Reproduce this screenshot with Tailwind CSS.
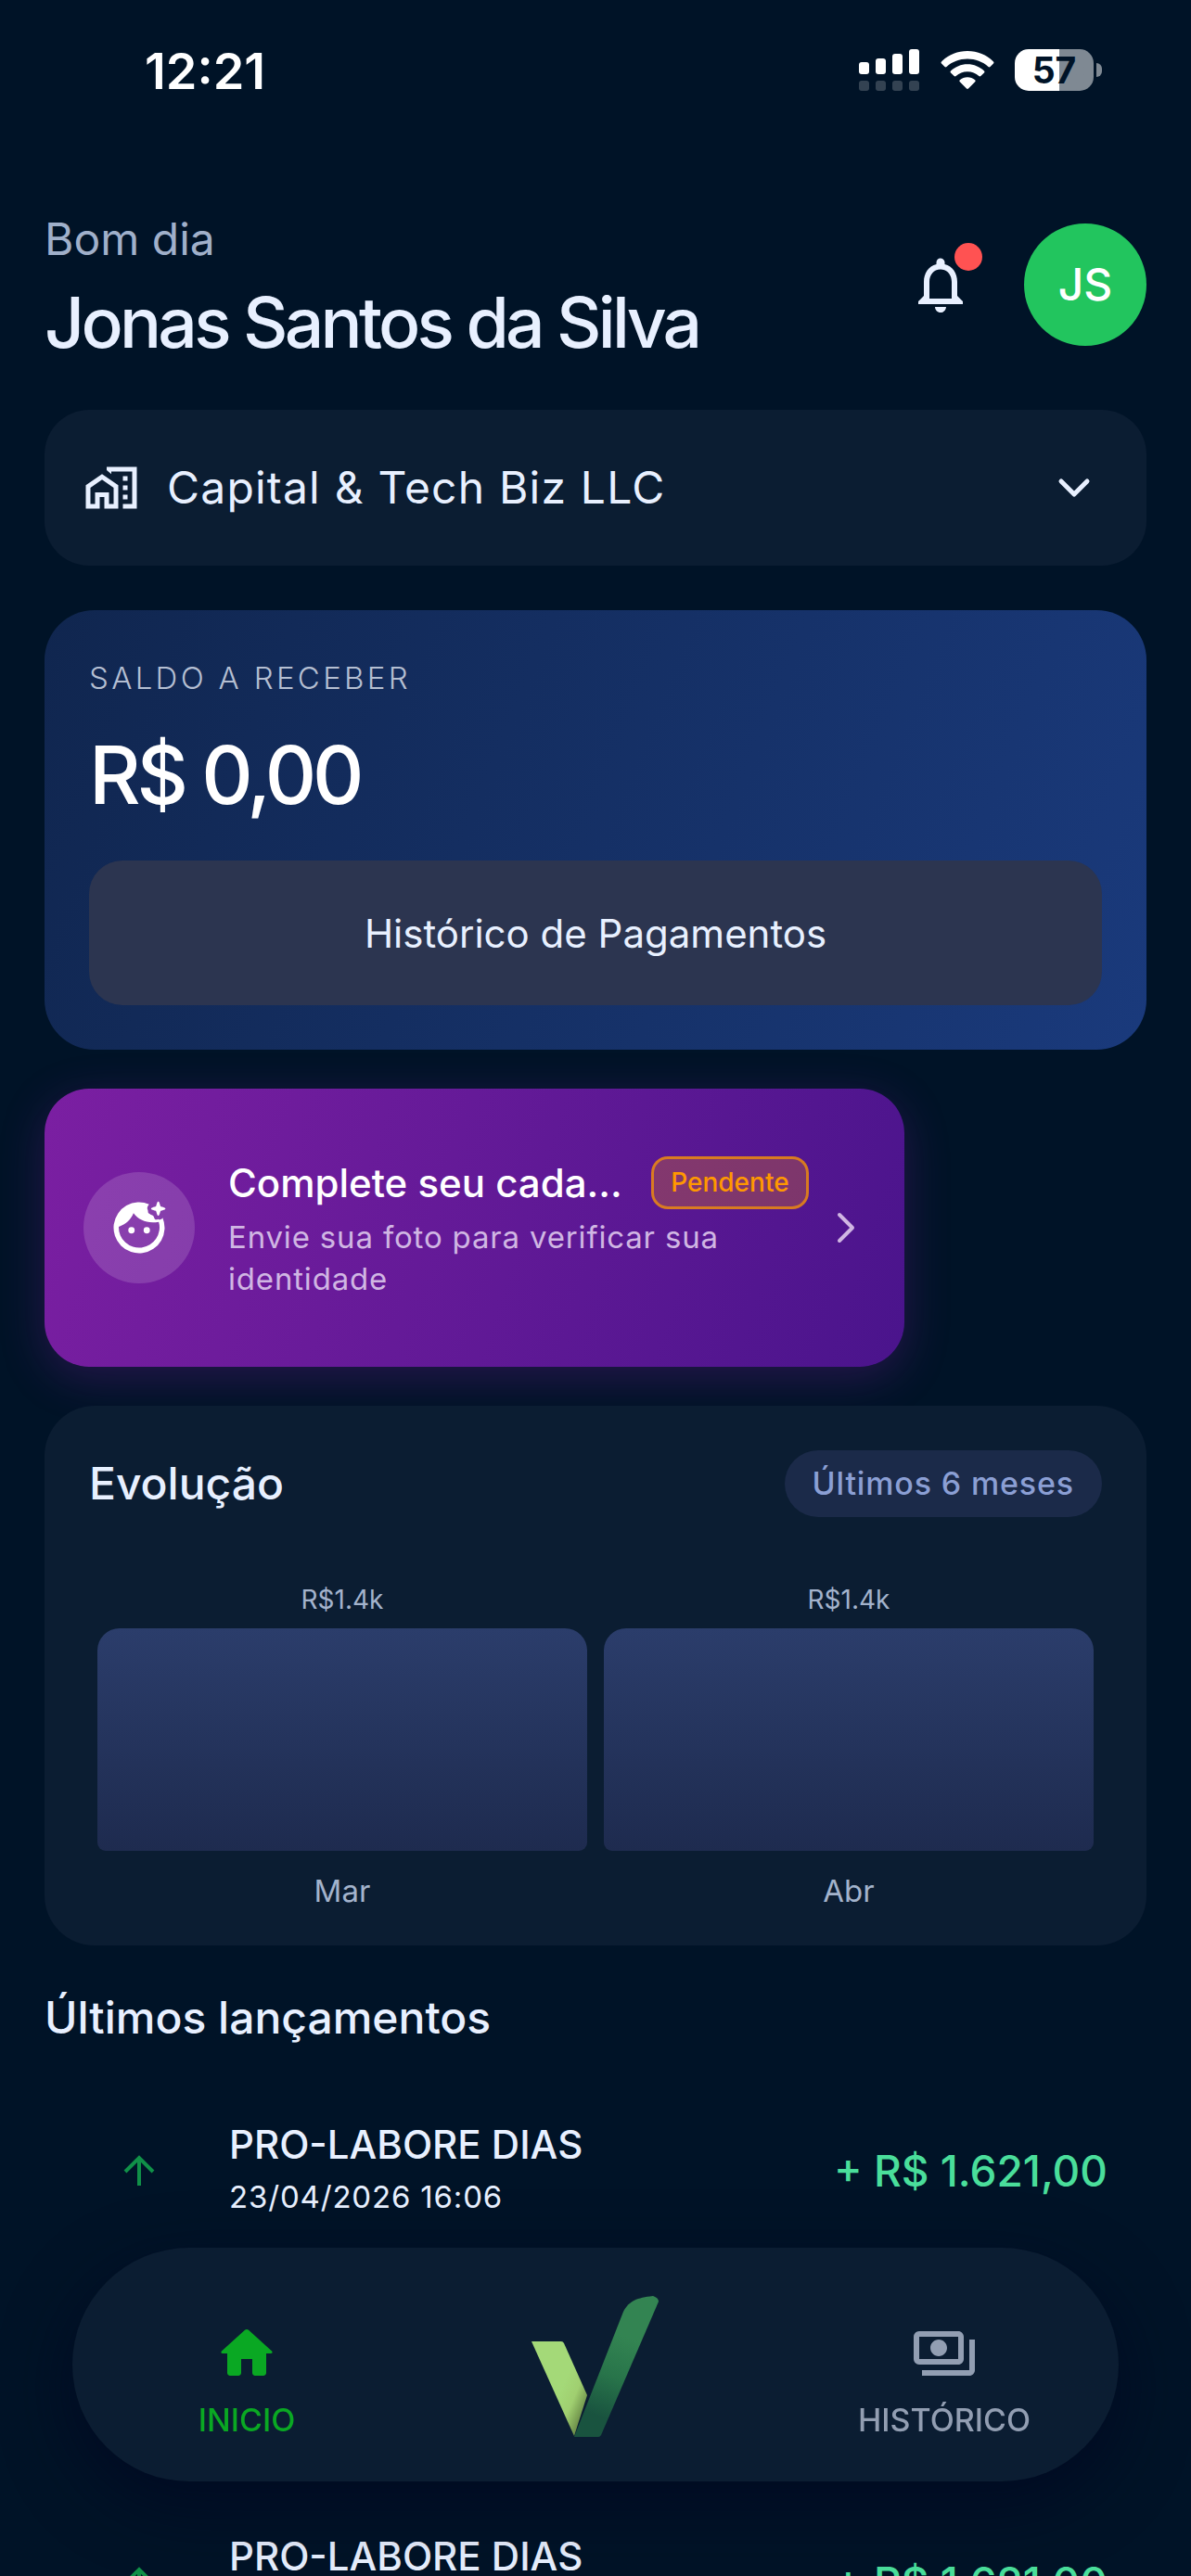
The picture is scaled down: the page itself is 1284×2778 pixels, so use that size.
<!DOCTYPE html>
<html lang="pt-BR">
<head>
  <meta charset="UTF-8" />
  <meta name="viewport" content="width=device-width, initial-scale=1.0" />
  <title>Início</title>
  <script src="https://cdn.jsdelivr.net/npm/@tailwindcss/browser@4"></script>
</head>
<body class="h-screen overflow-hidden bg-[#001327] font-['Inter','Liberation_Sans',sans-serif] text-[#e8f0ff]">

  <!-- Status bar -->
  <div class="flex h-[150px] items-center justify-between pl-[156px] pr-24 text-white">
    <div class="pt-1 text-[54px] leading-[60px] font-semibold">12:21</div>
    <div class="flex items-center gap-[22px]">
      <svg class="h-[45px] w-[66px]" viewBox="0 0 66 45" fill="currentColor">
        <rect x="0" y="14" width="11" height="13" rx="3" />
        <rect x="18" y="10" width="11" height="17" rx="3" />
        <rect x="36" y="5" width="11" height="22" rx="3" />
        <rect x="54" y="0" width="11" height="27" rx="3" />
        <g opacity=".2">
          <rect x="0" y="34" width="11" height="11" rx="3" />
          <rect x="18" y="34" width="11" height="11" rx="3" />
          <rect x="36" y="34" width="11" height="11" rx="3" />
          <rect x="54" y="34" width="11" height="11" rx="3" />
        </g>
      </svg>
      <svg class="h-[43px] w-[58px]" viewBox="0 0 58 43" fill="currentColor">
        <path d="M1 12.500C8.500 5 18 1 29 1s20.500 4 28 11.500c.6.600.6 1.400 0 2l-3.500 3.500c-.6.600-1.400.6-2 0C45.500 12.500 37.500 9.500 29 9.500S12.500 12.500 6.500 18c-.6.600-1.400.6-2 0L1 14.500c-.6-.6-.6-1.400 0-2z" />
        <path d="M11 22.500c5-4.600 11-7.200 18-7.200s13 2.600 18 7.200c.6.600.6 1.400 0 2L43.300 28c-.6.600-1.300.6-1.900 0-3.500-3-7.600-4.700-12.400-4.700S20.100 25 16.600 28c-.6.600-1.300.6-1.900 0L11 24.500c-.6-.6-.6-1.400 0-2z" />
        <path d="M20.800 32.300c2.300-2 5.100-3 8.200-3s5.900 1 8.200 3c.6.500.6 1.300 0 1.900L30 41.600c-.6.600-1.400.6-2 0l-7.200-7.400c-.6-.6-.6-1.400 0-1.900z" />
      </svg>
      <div class="flex items-center gap-[3px]">
        <div class="flex h-[45px] w-[85px] items-center justify-center rounded-[15px] bg-linear-to-r from-white from-56% to-[#7f8993] to-56% text-[39px] leading-[45px] font-bold text-[#001327]">57</div>
        <div class="h-[15px] w-[6px] rounded-r-full bg-[#7f8993]"></div>
      </div>
    </div>
  </div>

  <main class="px-12">

    <!-- Header -->
    <header class="flex h-[292px] items-start justify-between pt-[78px]">
      <div>
        <p class="text-[48px] leading-[60px] text-[#a0b0ca]">Bom dia</p>
        <h1 class="mt-3 text-[75px] leading-[96px] font-medium tracking-tighter">Jonas Santos da Silva</h1>
      </div>
      <div class="mt-[13px] flex items-center gap-[54px]">
        <button class="relative" aria-label="Notificações">
          <svg class="size-[72px]" viewBox="0 0 24 24" fill="currentColor"><path d="M12 22c1.100 0 2-.9 2-2h-4c0 1.100.9 2 2 2zm6-6v-5c0-3.070-1.630-5.640-4.500-6.320V4c0-.83-.67-1.500-1.500-1.500s-1.500.67-1.500 1.500v.68C7.640 5.360 6 7.920 6 11v5l-2 2v1h16v-1l-2-2zm-2 1H8v-6c0-2.480 1.510-4.500 4-4.500s4 2.020 4 4.500v6z" /></svg>
          <span class="absolute -top-[9px] -right-[9px] size-[30px] rounded-full bg-[#ff5252]"></span>
        </button>
        <button class="size-[132px] rounded-full bg-[#22c55e] text-[48px] leading-[60px] font-medium text-white">JS</button>
      </div>
    </header>

    <!-- Company -->
    <div class="relative flex h-[168px] items-center rounded-[48px] bg-[#0b1d32]">
      <svg class="pointer-events-none absolute left-[42px] size-[60px]" viewBox="0 0 24 24" fill="currentColor"><path fill-rule="evenodd" d="M1 10.900V21h6v-5h2v5h6V10.900L8 6.100zM3 19v-7l5-3.500 5 3.500v7h-2v-5H5v5z" /><path d="M10 3v1.400l2 1.700V5h9v14h-4v2h6V3zM17 7h2v2h-2zM17 11h2v2h-2zM17 15h2v2h-2z" /></svg>
      <select aria-label="Empresa" class="h-full w-full appearance-none bg-transparent pr-32 pl-[132px] text-[48px] tracking-wide outline-none">
        <option>Capital &amp; Tech Biz LLC</option>
      </select>
      <svg class="pointer-events-none absolute right-[60px] h-9 w-9" viewBox="0 0 36 36" fill="none" stroke="currentColor" stroke-width="5" stroke-linecap="round" stroke-linejoin="round"><path d="M4 11l14 14 14-14" /></svg>
    </div>

    <!-- Balance -->
    <section class="mt-12 flex flex-col rounded-[54px] bg-linear-[112deg] from-[#10264f] to-[#1a3a7c] p-12">
      <h2 class="mt-1 text-[33px] leading-[42px] font-light tracking-widest text-[#b5bfd2]">SALDO A RECEBER</h2>
      <p class="mt-7 mb-9 text-[86px] leading-[112px] font-medium tracking-tighter text-white">R$ 0,00</p>
      <button class="h-[156px] rounded-[36px] bg-[#2c3550] text-[42px]">Histórico de Pagamentos</button>
    </section>

    <!-- Pending registration -->
    <button class="mt-[42px] flex h-[300px] w-[78%] items-center rounded-[48px] bg-linear-[108deg] from-[#7b1fa2] to-[#4a148c] px-[42px] text-left shadow-[0_12px_48px_rgba(123,31,162,0.300)]">
      <span class="flex size-[120px] shrink-0 items-center justify-center rounded-full bg-white/15">
        <svg class="size-[66px] text-white" viewBox="0 0 24 24" fill="currentColor">
          <path fill-rule="evenodd" d="M15.900 2.800A10 10 0 1 0 21.200 8.100C20.700 9 20 8.900 19.400 8.600 18.600 9.100 18 8.800 17.700 7.500 17.300 6.900 16.500 7 16.100 6.500 15.200 6.200 15.700 5.600 15.300 4.800 15 4 15.400 3.500 15.900 2.800zM4 11.600C6.800 10.700 8.800 8.800 9.800 6.300 11.900 9.200 15.300 10.400 19.700 9.700A8 8 0 1 1 4 11.600z" />
          <circle cx="9" cy="13" r="1.250" /><circle cx="15" cy="13" r="1.250" />
          <path d="M19.500 1.700c.3 0 .4.200.9 1.900 1.700.5 1.900.6 1.900.9s-.2.400-1.900.9c-.5 1.700-.6 1.900-.9 1.900s-.4-.2-.9-1.900c-1.700-.5-1.900-.6-1.900-.9s.2-.4 1.900-.9c.5-1.700.6-1.900.9-1.900z" />
        </svg>
      </span>
      <span class="ml-9 min-w-0 flex-1">
        <span class="flex items-center gap-6">
          <span class="min-w-0 flex-1 truncate text-[42px] leading-[57px] font-medium text-white">Complete seu cadastro</span>
          <span class="rounded-[18px] border-3 border-[#ff9800]/70 bg-[#ff9800]/25 px-[18px] text-[28px] leading-[51px] font-medium text-[#ff9800]">Pendente</span>
        </span>
        <span class="mt-2 block text-[33px] leading-[45px] tracking-wide text-[#d0b6e3]">Envie sua foto para verificar sua identidade</span>
      </span>
      <svg class="mr-[3px] ml-[22px] h-9 w-9 shrink-0 text-[#d0b6e3]" viewBox="0 0 36 36" fill="none" stroke="currentColor" stroke-width="4" stroke-linecap="round" stroke-linejoin="round"><path d="M11 4l14 14-14 14" /></svg>
    </button>

    <!-- Chart -->
    <section class="relative mt-[42px] h-[582px] rounded-[54px] bg-[#0b1d32] p-12">
      <div class="flex items-center justify-between">
        <h2 class="text-[48px] leading-[60px] font-medium">Evolução</h2>
        <span class="rounded-full bg-[#1b2a49] px-[30px] text-[34px] leading-[72px] font-medium tracking-wide text-[#8b9fd4]">Últimos 6 meses</span>
      </div>
      <div class="mt-[70px] grid grid-cols-2 gap-[18px] px-[9px] text-center text-[#a3b3cc]">
        <div>
          <div class="text-[28px] leading-[39px]">R$1.4k</div>
          <div class="mt-[11px] h-[240px] rounded-t-[24px] rounded-b-[9px] bg-linear-to-b from-[#2b3d6b] to-[#1e2b4f]"></div>
          <div class="mt-[21px] text-[33px] leading-[45px]">Mar</div>
        </div>
        <div>
          <div class="text-[28px] leading-[39px]">R$1.4k</div>
          <div class="mt-[11px] h-[240px] rounded-t-[24px] rounded-b-[9px] bg-linear-to-b from-[#2b3d6b] to-[#1e2b4f]"></div>
          <div class="mt-[21px] text-[33px] leading-[45px]">Abr</div>
        </div>
      </div>
    </section>

    <!-- Latest entries -->
    <h2 class="mt-12 text-[48px] leading-[60px] font-medium">Últimos lançamentos</h2>
    <ul class="mt-6 flex flex-col gap-[222px] px-[42px]">
      <li class="flex h-[222px] shrink-0 items-center">
        <svg class="mx-10 h-10 w-10 text-[#109048]" viewBox="0 0 40 40" fill="none" stroke="currentColor" stroke-width="4"><path d="M20 36V6M5 21L20 6l15 15" /></svg>
        <div class="ml-[37px] flex-1">
          <div class="text-[42px] leading-[57px] font-medium">PRO-LABORE DIAS</div>
          <div class="text-[33px] leading-[57px] tracking-wide">23/04/2026 16:06</div>
        </div>
        <div class="text-[46px] font-medium text-[#4ade9b]">+ R$ 1.621,00</div>
      </li>
      <li class="flex h-[222px] shrink-0 items-center">
        <svg class="mx-10 h-10 w-10 text-[#109048]" viewBox="0 0 40 40" fill="none" stroke="currentColor" stroke-width="4"><path d="M20 36V6M5 21L20 6l15 15" /></svg>
        <div class="ml-[37px] flex-1">
          <div class="text-[42px] leading-[57px] font-medium">PRO-LABORE DIAS</div>
          <div class="text-[33px] leading-[57px] tracking-wide">23/04/2026 16:06</div>
        </div>
        <div class="text-[46px] font-medium text-[#4ade9b]">+ R$ 1.621,00</div>
      </li>
    </ul>
  </main>

  <!-- Bottom navigation -->
  <nav class="fixed inset-x-[78px] bottom-[102px] grid h-[252px] grid-cols-3 items-center rounded-full bg-[#0b1d32] text-[34px] leading-[42px] font-medium shadow-[0_24px_72px_rgba(0,0,30,0.500)]">
    <a href="#" class="flex flex-col items-center gap-[15px] pt-8 text-[#0aa823]">
      <svg class="size-[72px]" viewBox="0 0 24 24" fill="currentColor"><path d="M10 19v-5h4v5c0 .55.45 1 1 1h3c.55 0 1-.45 1-1v-7h1.700c.46 0 .68-.57.33-.87L12.670 3.600c-.38-.34-.96-.34-1.340 0l-8.360 7.530c-.34.3-.13.87.33.87H5v7c0 .55.45 1 1 1h3c.55 0 1-.45 1-1z" /></svg>
      INICIO
    </a>
    <a href="#" class="flex justify-center pt-1" aria-label="Menu">
      <svg class="h-[153px] w-[138px]" viewBox="0 0 138 153">
        <defs>
          <linearGradient id="leaf" gradientUnits="userSpaceOnUse" x1="30" y1="105" x2="60" y2="118">
            <stop offset="0" stop-color="#a4d978" />
            <stop offset=".5" stop-color="#a0cf70" />
            <stop offset="1" stop-color="#6b8d48" />
          </linearGradient>
          <linearGradient id="stem" gradientUnits="userSpaceOnUse" x1="90" y1="40" x2="60" y2="125">
            <stop offset="0" stop-color="#338452" />
            <stop offset=".5" stop-color="#28744a" />
            <stop offset="1" stop-color="#19533f" />
          </linearGradient>
        </defs>
        <path d="M0 49h32q2 0 3 2l25 56-14 44z" fill="url(#leaf)" />
        <path d="M46 152L99 17C105 5 114 2 131 0q6 2 6 6L75 150q-1 2-3 2z" fill="url(#stem)" />
      </svg>
    </a>
    <a href="#" class="flex flex-col items-center gap-[15px] pt-8 text-[#929eb2]">
      <svg class="size-[72px]" viewBox="0 0 24 24" fill="currentColor"><path d="M19 14V6c0-1.100-.9-2-2-2H3c-1.100 0-2 .9-2 2v8c0 1.100.9 2 2 2h14c1.100 0 2-.9 2-2zm-2 0H3V6h14v8zm-7-7c-1.660 0-3 1.340-3 3s1.340 3 3 3 3-1.340 3-3-1.340-3-3-3zm13 0v11c0 1.100-.9 2-2 2H4v-2h17V7h2z" /></svg>
      HISTÓRICO
    </a>
  </nav>

</body>
</html>
